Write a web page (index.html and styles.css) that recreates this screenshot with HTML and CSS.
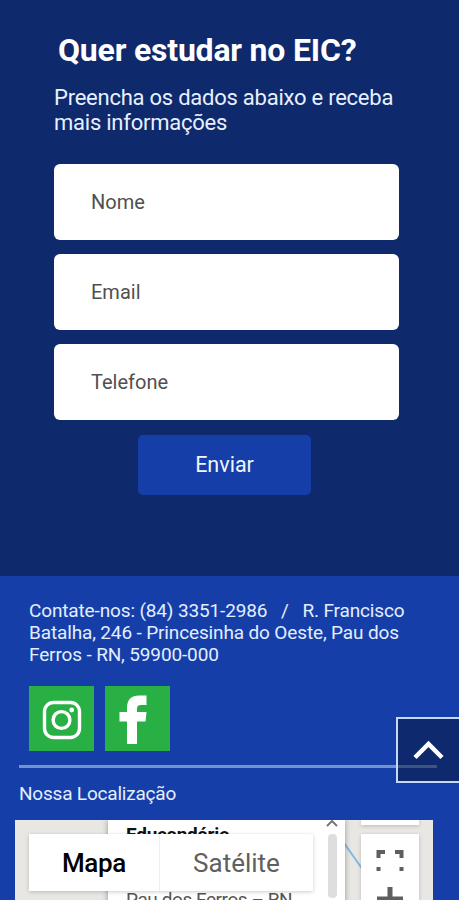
FILE: index.html
```html
<!DOCTYPE html>
<html lang="pt-BR">
<head>
    <meta charset="UTF-8">
    <meta name="viewport" content="width=device-width, initial-scale=1.0">
    <title>EIC</title>
    <link rel="stylesheet" href="styles.css">
</head>
<body>

<section class="signup">
    <h2>Quer estudar no EIC?</h2>
    <p class="signup-text">Preencha os dados abaixo e receba<br>mais informações</p>
    <form class="signup-form">
        <input type="text" name="nome" placeholder="Nome">
        <input type="email" name="email" placeholder="Email">
        <input type="tel" name="telefone" placeholder="Telefone">
        <button type="button">Enviar</button>
    </form>
</section>

<footer class="footer">
    <p class="contact">Contate-nos: (84) 3351-2986 &nbsp; / &nbsp; R. Francisco<br>Batalha, 246 - Princesinha do Oeste, Pau dos<br>Ferros - RN, 59900-000</p>

    <div class="social">
        <a href="#" aria-label="Instagram">
            <svg width="65" height="65" viewBox="0 0 65 65" fill="none" stroke="#fff">
                <rect x="15.500" y="16.500" width="35" height="35" rx="9" stroke-width="3.400"/>
                <circle cx="32.500" cy="34" r="8.400" stroke-width="3.400"/>
                <circle cx="42.700" cy="24" r="2.400" fill="#fff" stroke="none"/>
            </svg>
        </a>
        <a href="#" aria-label="Facebook">
            <svg width="65" height="65" viewBox="0 0 65 65" fill="#fff">
                <path d="M22 58V35.500H14.500V26H22V22C22 13.500 26.500 9.500 34 9.500H41.500V19H36.500C33 19 32 20.500 32 23V26H41.500L40.500 35.500H32V58Z"/>
            </svg>
        </a>
    </div>

    <hr>
    <h3>Nossa Localização</h3>

    <div class="map">
        <svg class="map-route" width="418" height="80" viewBox="0 0 418 80" fill="none">
            <path d="M329 23L348 50" stroke="#82b9e3" stroke-width="2"/>
        </svg>
        <div class="place-card">
            <div class="place-name">Educandário</div>
            <div class="place-address">Pau dos Ferros – RN</div>
            <svg class="scroll-arrow" width="14" height="9" viewBox="0 0 14 9" fill="none" stroke="#777" stroke-width="2">
                <path d="M2 7L7 2L12 7"/>
            </svg>
            <div class="scroll-thumb"></div>
        </div>
        <div class="map-type">
            <span class="active">Mapa</span>
            <span>Satélite</span>
        </div>
        <div class="map-corner"></div>
        <div class="map-controls">
            <svg width="58" height="66" viewBox="0 0 58 66" fill="none" stroke="#5f5f5f" stroke-width="4">
                <path d="M17.500 24V18H24M34 18H40.500V24M17.500 33V37M40.500 33V37"/>
                <path d="M29 53V66M16 65H42" stroke-width="5"/>
            </svg>
        </div>
    </div>
</footer>

<a href="#" class="back-to-top" aria-label="Voltar ao topo">
    <svg width="62" height="62" viewBox="0 0 62 62" fill="none" stroke="#fff" stroke-width="4.500">
        <path d="M17 38.500L30.500 25L44 38.500"/>
    </svg>
</a>

</body>
</html>
```
FILE: styles.css
```css
* {
    box-sizing: border-box;
}

body {
    margin: 0;
    height: 900px;
    overflow: hidden;
    font-family: Roboto, sans-serif;
    color: #fff;
    background: #163ea8;
}

.signup {
    height: 576px;
    padding: 30px 60px 0 54px;
    background: #0e296c;
}

h2 {
    margin: 0 0 0 4px;
    font-size: 32px;
    line-height: 40px;
    font-weight: 700;
    letter-spacing: -0.2px;
    white-space: nowrap;
}

.signup-text {
    margin: 15px 0 29px;
    font-size: 22px;
    line-height: 25px;
    letter-spacing: -0.24px;
    white-space: nowrap;
    color: #e6f0ff;
}

.signup-form {
    display: flex;
    flex-direction: column;
    gap: 14.200px;
}

input {
    width: 345px;
    height: 76px;
    padding: 0 37px;
    border: none;
    border-radius: 6px;
    background: #fff;
    font-family: inherit;
    font-size: 20px;
}

input::placeholder {
    color: #505050;
    opacity: 1;
}

button {
    width: 173px;
    height: 60px;
    margin-left: 84px;
    padding: 0;
    border: none;
    border-radius: 5px;
    background: #163ea8;
    color: #f0f5ff;
    font-family: inherit;
    font-size: 21.500px;
}

.footer {
    height: 324px;
    padding: 24px 22px 0 15px;
}

.contact {
    margin: 0 0 20px 14px;
    font-size: 19px;
    line-height: 22px;
    letter-spacing: -0.14px;
    white-space: nowrap;
    color: #e3eeff;
}

.social {
    display: flex;
    gap: 11px;
    margin-left: 14px;
}

.social a {
    width: 65px;
    height: 65px;
    background: #29b045;
}

.social svg {
    display: block;
}

hr {
    height: 3px;
    margin: 14px 0 0 4px;
    border: none;
    background: #7294c8;
}

h3 {
    margin: 14px 0 0 4px;
    font-size: 19px;
    line-height: 24px;
    font-weight: 400;
    letter-spacing: -0.2px;
    white-space: nowrap;
    color: #e3eeff;
}

.map {
    position: relative;
    width: 418px;
    height: 80px;
    margin-top: 14px;
    overflow: hidden;
    background: #e8e7e3;
}

.map-route {
    position: absolute;
    top: 0;
    left: 0;
}

.place-card {
    position: absolute;
    top: 0;
    left: 93px;
    width: 237px;
    height: 90px;
    padding: 3px 18px;
    background: #fff;
    box-shadow: 0 0 6px rgba(0, 0, 0, .35);
    white-space: nowrap;
}

.place-name {
    height: 66px;
    font-size: 19px;
    line-height: 24px;
    font-weight: 700;
    letter-spacing: -0.25px;
    color: #111;
}

.place-address {
    font-size: 19px;
    line-height: 22px;
    letter-spacing: -0.43px;
    color: #555;
}

.scroll-arrow {
    position: absolute;
    top: -1px;
    left: 217px;
}

.scroll-thumb {
    position: absolute;
    top: 14px;
    left: 220px;
    width: 9px;
    height: 64px;
    border-radius: 4px;
    background: #dedede;
}

.map-type {
    position: absolute;
    top: 14px;
    left: 14px;
    display: flex;
    width: 284px;
    height: 57px;
    background: #fff;
    box-shadow: 0 1px 4px rgba(0, 0, 0, .2);
    font-size: 26px;
    line-height: 58px;
    text-align: center;
    color: #606060;
}

.map-type span {
    flex: 1;
}

.map-type .active {
    flex: 0 0 131px;
    border-right: 1px solid #eee;
    font-weight: 500;
    letter-spacing: -0.3px;
    color: #000;
}

.map-corner,
.map-controls {
    position: absolute;
    left: 346px;
    width: 58px;
    background: #fff;
    box-shadow: 0 1px 4px rgba(0, 0, 0, .2);
}

.map-corner {
    top: 0;
    height: 5px;
}

.map-controls {
    top: 14px;
    height: 66px;
}

.back-to-top {
    position: absolute;
    top: 717px;
    left: 396px;
    width: 66px;
    height: 66px;
    border: 2px solid #c4d8f8;
    background: rgba(6, 20, 52, .5);
}
```
